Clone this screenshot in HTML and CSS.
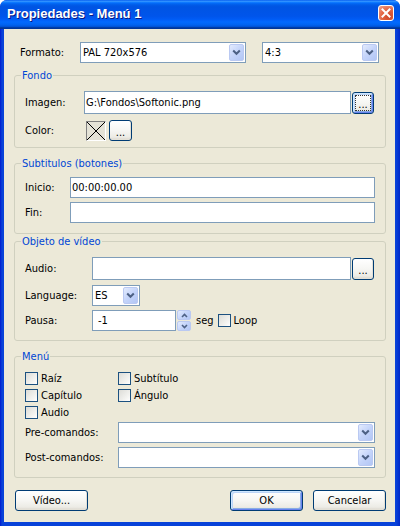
FILE: index.html
```html
<!DOCTYPE html>
<html lang="es">
<head>
<meta charset="utf-8">
<title>Propiedades - Menú 1</title>
<link rel="stylesheet" href="styles.css">
</head>
<body>
<div class="window">
  <div class="titlebar">
    <span class="title">Propiedades - Menú 1</span>
    <span class="close"><svg width="14" height="14" viewBox="0 0 14 14"><path d="M3.5 3.5 L10.5 10.5 M10.5 3.5 L3.5 10.5" stroke="#fff" stroke-width="2" stroke-linecap="square"/></svg></span>
  </div>
  <div class="client">
    <div class="row r-fmt">
      <span class="lbl lbl-fmt">Formato:</span>
      <div class="combo c-fmt"><span class="val">PAL 720x576</span><span class="drop"><svg width="9" height="7" viewBox="0 0 9 7"><path d="M1.2 1.5 L4.5 4.8 L7.8 1.5" stroke="#4D6185" stroke-width="2" fill="none"/></svg></span></div>
      <div class="combo c-aspect"><span class="val">4:3</span><span class="drop"><svg width="9" height="7" viewBox="0 0 9 7"><path d="M1.2 1.5 L4.5 4.8 L7.8 1.5" stroke="#4D6185" stroke-width="2" fill="none"/></svg></span></div>
    </div>

    <fieldset class="group g-fondo">
      <legend>Fondo</legend>
      <div class="gbody">
        <div class="row r-img">
          <span class="lbl lbl-fondo">Imagen:</span>
          <div class="edit e-img">G:\Fondos\Softonic.png</div>
          <div class="btn btn-dots btn-default btn-focus">...</div>
        </div>
        <div class="row r-color">
          <span class="lbl lbl-fondo">Color:</span>
          <span class="swatch"><svg width="18" height="18" viewBox="0 0 18 18"><path d="M0 0 L18 18 M18 0 L0 18" stroke="#000" stroke-width="1"/></svg></span>
          <div class="btn btn-color">...</div>
        </div>
      </div>
    </fieldset>

    <fieldset class="group g-subt">
      <legend>Subtitulos (botones)</legend>
      <div class="gbody">
        <div class="row r-ini">
          <span class="lbl lbl-subt">Inicio:</span>
          <div class="edit e-subt">00:00:00.00</div>
        </div>
        <div class="row r-fin">
          <span class="lbl lbl-subt">Fin:</span>
          <div class="edit e-subt"></div>
        </div>
      </div>
    </fieldset>

    <fieldset class="group g-video">
      <legend>Objeto de vídeo</legend>
      <div class="gbody">
        <div class="row r-audio">
          <span class="lbl lbl-video">Audio:</span>
          <div class="edit e-audio"></div>
          <div class="btn btn-dots">...</div>
        </div>
        <div class="row r-lang">
          <span class="lbl lbl-video">Language:</span>
          <div class="combo c-lang"><span class="val val-lang">ES</span><span class="drop"><svg width="9" height="7" viewBox="0 0 9 7"><path d="M1.2 1.5 L4.5 4.8 L7.8 1.5" stroke="#4D6185" stroke-width="2" fill="none"/></svg></span></div>
        </div>
        <div class="row r-pausa">
          <span class="lbl lbl-video">Pausa:</span>
          <div class="edit e-pausa">-1</div>
          <div class="spin">
            <span class="spin-btn"><svg width="7" height="5" viewBox="0 0 7 5"><path d="M1 4 L3.5 1.5 L6 4" stroke="#4D6185" stroke-width="1.6" fill="none"/></svg></span>
            <span class="spin-btn"><svg width="7" height="5" viewBox="0 0 7 5"><path d="M1 1 L3.5 3.5 L6 1" stroke="#4D6185" stroke-width="1.6" fill="none"/></svg></span>
          </div>
          <span class="seg">seg</span>
          <span class="cb cb-loop"></span>
          <span class="cb-text">Loop</span>
        </div>
      </div>
    </fieldset>

    <fieldset class="group g-menu">
      <legend>Menú</legend>
      <div class="gbody">
        <div class="checks">
          <div class="check"><span class="cb"></span><span class="cb-text">Raíz</span></div>
          <div class="check"><span class="cb"></span><span class="cb-text">Subtítulo</span></div>
          <div class="check"><span class="cb"></span><span class="cb-text">Capítulo</span></div>
          <div class="check"><span class="cb"></span><span class="cb-text">Ángulo</span></div>
          <div class="check"><span class="cb"></span><span class="cb-text">Audio</span></div>
        </div>
        <div class="row r-pre">
          <span class="lbl lbl-menu">Pre-comandos:</span>
          <div class="combo c-cmd"><span class="val"></span><span class="drop"><svg width="9" height="7" viewBox="0 0 9 7"><path d="M1.2 1.5 L4.5 4.8 L7.8 1.5" stroke="#4D6185" stroke-width="2" fill="none"/></svg></span></div>
        </div>
        <div class="row r-post">
          <span class="lbl lbl-menu">Post-comandos:</span>
          <div class="combo c-cmd"><span class="val"></span><span class="drop"><svg width="9" height="7" viewBox="0 0 9 7"><path d="M1.2 1.5 L4.5 4.8 L7.8 1.5" stroke="#4D6185" stroke-width="2" fill="none"/></svg></span></div>
        </div>
      </div>
    </fieldset>

    <div class="row r-buttons">
      <div class="btn btn-main btn-video">Vídeo...</div>
      <div class="btn btn-main btn-default btn-ok">OK</div>
      <div class="btn btn-main btn-cancel">Cancelar</div>
    </div>
  </div>
</div>
</body>
</html>
```

FILE: styles.css
```css
* { box-sizing: border-box; }
html, body { margin: 0; padding: 0; background: #ffffff; }
body {
  width: 400px;
  height: 526px;
  overflow: hidden;
  font-family: "DejaVu Sans Condensed", "DejaVu Sans", "Liberation Sans", sans-serif;
  font-stretch: condensed;
  font-size: 11px;
  color: #000;
}

.window {
  width: 400px;
  height: 526px;
  background: linear-gradient(90deg, #0019CF 0, #0842D9 2px, #0842D9 396px, #0028C8 400px);
  border-radius: 7px 7px 0 0;
  display: flex;
  flex-direction: column;
  overflow: hidden;
}

.titlebar {
  height: 29px;
  flex: none;
  display: flex;
  align-items: flex-start;
  justify-content: space-between;
  padding: 0 6px 0 7px;
  background: linear-gradient(to bottom, #0058ee 0%, #3593ff 4%, #288eff 6%, #127dff 8%, #036ffc 10%, #0262ee 14%, #0057e5 20%, #0054e3 24%, #0055eb 56%, #005bf5 66%, #026afe 76%, #0062ef 86%, #0052d6 92%, #0040ab 94%, #003092 100%);
}
.title {
  margin-top: 6px;
  font-family: "Liberation Sans", Arial, sans-serif;
  font-stretch: normal;
  font-weight: bold;
  font-size: 13px;
  line-height: 16px;
  color: #fff;
  text-shadow: 1px 1px 0 #0A1883;
}
.close {
  margin-top: 5px;
  width: 16px;
  height: 16px;
  border: 1px solid #fff;
  border-radius: 3px;
  background: radial-gradient(circle at 70% 75%, #CC4626 0%, #E2613E 45%, #F0A590 100%);
  display: flex;
  align-items: center;
  justify-content: center;
}

.client {
  flex: 1;
  margin: 0 5px 4px 4px;
  background: #ECE9D8;
  padding: 12px 9px 0 10px;
}

.row { display: flex; align-items: center; }
.lbl { flex: none; white-space: nowrap; }

.r-fmt { height: 22px; padding-left: 6px; }
.lbl-fmt { width: 60px; }
.c-fmt { width: 166px; height: 22px; }
.c-aspect { width: 117px; height: 22px; margin-left: 16px; }

.edit {
  height: 21px;
  border: 1px solid #7F9DB9;
  background: #fff;
  padding-left: 1px;
  line-height: 19px;
  white-space: nowrap;
  overflow: hidden;
}
.combo {
  height: 21px;
  border: 1px solid #7F9DB9;
  background: #fff;
  display: flex;
  padding: 1px;
}
.combo .val { flex: 1; padding-left: 1px; line-height: 18px; white-space: nowrap; }
.combo .drop {
  flex: none;
  width: 15px;
  border: 1px solid #BAC9F2;
  border-radius: 2px;
  background: linear-gradient(135deg, #E3EBFD 0%, #C4D4FA 50%, #B2C6F5 100%);
  display: flex;
  align-items: center;
  justify-content: center;
}

.group {
  margin: 0;
  padding: 0;
  border: 1px solid #D0D0BF;
  border-radius: 3px;
  min-width: 0;
}
.group legend {
  margin-left: 6px;
  padding: 0 1px;
  line-height: 13px;
  color: #0046D5;
}
.gbody { padding: 0 10px; }

.btn {
  display: flex;
  align-items: center;
  justify-content: center;
  border: 1px solid #003C74;
  border-radius: 3px;
  background: linear-gradient(180deg, #FFFFFF 0%, #F6F6F3 50%, #ECEBE5 85%, #D9D4CA 100%);
  box-shadow: inset -1px -1px 0 #E3E0D6;
  white-space: nowrap;
}
.btn-default {
  box-shadow: inset 1px 1px 0 #CEE7FF, inset -1px -1px 0 #6982EE, inset 2px 2px 0 #BCD4F6, inset -2px -2px 0 #89ADE4;
}
.btn-focus { outline: 1px dotted #333; outline-offset: -4px; }
.btn-dots { width: 22px; height: 22px; margin-left: 1px; line-height: 1; padding-top: 3px; }

/* Fondo */
.g-fondo { margin-top: 6px; }
.g-fondo .gbody { padding-bottom: 6px; }
.lbl-fondo { width: 59px; }
.r-img { margin-top: 9px; height: 23px; }
.e-img { width: 267px; height: 23px; line-height: 21px; }
.r-color { margin-top: 6px; height: 21px; }
.swatch {
  width: 20px;
  height: 20px;
  margin-left: 2px;
  border-top: 1px solid #808080;
  border-left: 1px solid #808080;
  border-bottom: 1px solid #fff;
  border-right: 1px solid #fff;
  background: #E4E2D6;
  display: flex;
}
.btn-color { width: 23px; height: 21px; margin-left: 3px; padding-top: 3px; }

/* Subtitulos */
.g-subt { margin-top: 9px; }
.g-subt .gbody { padding-bottom: 10px; }
.lbl-subt { width: 45px; }
.e-subt { width: 305px; }
.r-ini { margin-top: 7px; height: 21px; }
.r-fin { margin-top: 4px; height: 21px; }

/* Objeto de video */
.g-video { margin-top: 1px; }
.g-video .gbody { padding-bottom: 9px; }
.lbl-video { width: 67px; }
.r-audio { margin-top: 9px; height: 23px; }
.e-audio { width: 259px; height: 23px; }
.r-lang { margin-top: 5px; height: 21px; }
.c-lang { width: 48px; }
.val-lang { padding-left: 2px; }
.r-pausa { margin-top: 4px; height: 21px; }
.e-pausa { width: 84px; padding-left: 5px; }
.spin {
  width: 14px;
  height: 21px;
  margin-left: 1px;
  display: flex;
  flex-direction: column;
  gap: 1px;
}
.spin-btn {
  flex: 1;
  border: 1px solid #BAC9F2;
  border-radius: 2px;
  background: linear-gradient(135deg, #E3EBFD 0%, #C4D4FA 50%, #B2C6F5 100%);
  display: flex;
  align-items: center;
  justify-content: center;
}
.seg { margin-left: 5px; }
.cb {
  flex: none;
  width: 13px;
  height: 13px;
  border: 1px solid #1C5180;
  background: linear-gradient(135deg, #DCDCD7 0%, #F4F4F1 70%, #FFFFFF 100%);
}
.cb-loop { margin-left: 4px; }
.cb-text { margin-left: 3px; line-height: 13px; white-space: nowrap; }

/* Menu */
.g-menu { margin-top: 9px; }
.g-menu .gbody { padding-bottom: 9px; }
.checks {
  margin-top: 9px;
  display: grid;
  grid-template-columns: 93px 1fr;
  row-gap: 4px;
}
.check { display: flex; align-items: center; height: 13px; }
.lbl-menu { width: 93px; }
.c-cmd { width: 257px; }
.r-pre { margin-top: 3px; height: 21px; }
.r-post { margin-top: 4px; height: 21px; }

/* Bottom buttons */
.r-buttons { margin-top: 12px; height: 21px; }
.btn-main { width: 73px; height: 21px; }
.btn-video { margin-left: 1px; }
.btn-ok { margin-left: auto; }
.btn-cancel { margin-left: 10px; }
```
